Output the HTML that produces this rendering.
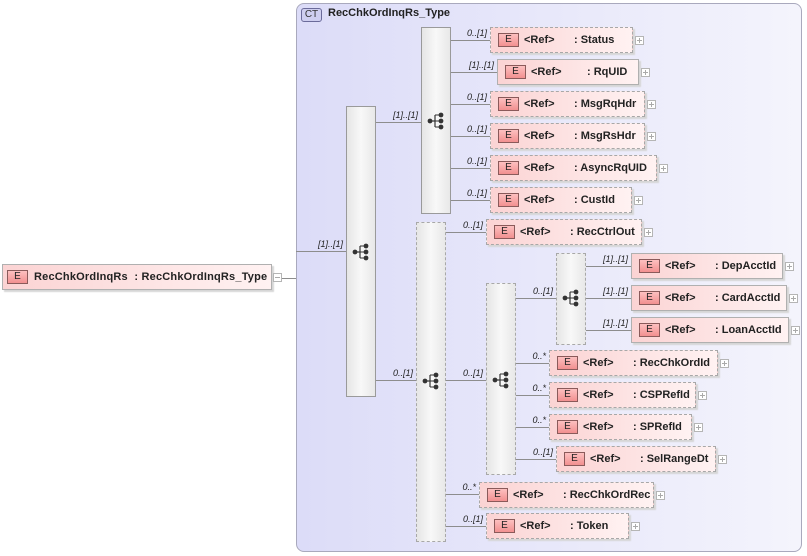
<!DOCTYPE html>
<html><head><meta charset="utf-8"><style>
body{margin:0;width:807px;height:556px;background:#fff;position:relative;overflow:hidden;font-family:"Liberation Sans",Arial,sans-serif}
.a{position:absolute}
#ct{left:296px;top:3px;width:506px;height:549px;border:1px solid #a9a9bd;border-radius:8px;background:linear-gradient(90deg,#dcdcf8,#f4f4fc);box-sizing:border-box}
.ctb{left:301px;top:8px;width:19px;height:12px;border:1px solid #6b6b9a;border-radius:3px;background:#cfcff0;font-size:10px;line-height:12px;text-align:center;color:#333}
.t{font-size:11px;font-weight:bold;color:#222;white-space:nowrap}
.cmp{background:linear-gradient(90deg,#e6e6e6,#f8f8f8 50%,#e8e8e8);border:1px solid #9a9a9a;box-sizing:border-box}
.cmp.d{border:1px dashed #a8a8a8}
.el{height:26px;box-sizing:border-box;border:1px solid #b0b0b0;background:linear-gradient(90deg,#fbd3d3,#fff2f2);box-shadow:2px 2px 1px #d6d6d6}
.el.d{border:1px dashed #a8a8a8}
.E{position:absolute;left:7px;top:5px;width:21px;height:14px;box-sizing:border-box;border:1px solid #8a5a5a;background:linear-gradient(#fdc0c0,#f29090);font-size:10px;line-height:12px;text-align:center;color:#222}
.pl{width:7px;height:7px;border:1px solid #b5b5b5;background:#fff;box-sizing:content-box}
.pl:before{content:"";position:absolute;left:1px;top:3px;width:5px;height:1px;background:#aaa}
.pl.p:after{content:"";position:absolute;left:3px;top:1px;width:1px;height:5px;background:#aaa}
.ln{height:1px;background:#8d8d8d}
.m{font-size:9px;font-style:italic;color:#222;white-space:nowrap}
</style></head><body>
<div id="ct" class="a"></div>
<div class="a ctb">CT</div>
<div class="a t" style="left:328px;top:7px">RecChkOrdInqRs_Type</div>
<div id="root" class="a el" style="left:2px;top:264px;width:270px;"><div class="E" style="left:4px">E</div><div class="a t" style="left:31px;top:6px;letter-spacing:0.2px">RecChkOrdInqRs&nbsp;&nbsp;: RecChkOrdInqRs_Type</div></div>
<div class="a pl" style="left:273px;top:273px"></div>
<div class="a ln" style="left:282px;top:278px;width:14px"></div>
<div id="x"></div>
<script>
var H='';
function cmp(x,y,w,h,d,choice){H+='<div class="a cmp'+(d?' d':'')+'" style="left:'+x+'px;top:'+y+'px;width:'+w+'px;height:'+h+'px"></div>';
var cx=x+w/2,cy=choice;
H+='<svg class="a" style="left:'+(cx-9)+'px;top:'+(cy-9)+'px" width="18" height="18"><circle cx="3" cy="9" r="2.4" fill="#333"/><line x1="3" y1="9" x2="8" y2="9" stroke="#333" stroke-width="1.2"/><line x1="8" y1="3" x2="8" y2="15" stroke="#333" stroke-width="1.2"/><line x1="8" y1="3" x2="14" y2="3" stroke="#333"/><line x1="8" y1="9" x2="14" y2="9" stroke="#333"/><line x1="8" y1="15" x2="14" y2="15" stroke="#333"/><circle cx="14" cy="3" r="2.4" fill="#333"/><circle cx="14" cy="9" r="2.4" fill="#333"/><circle cx="14" cy="15" r="2.4" fill="#333"/></svg>';}
function line(x1,x2,y,lab){H+='<div class="a ln" style="left:'+x1+'px;top:'+y+'px;width:'+(x2-x1)+'px"></div>';
if(lab)H+='<div class="a m" style="left:'+(x2-40)+'px;width:37px;text-align:right;top:'+(y-12)+'px">'+lab+'</div>';}
function el(x,y,w,name,d,off){off=off||83;H+='<div class="a el'+(d?' d':'')+'" style="left:'+x+'px;top:'+y+'px;width:'+w+'px"><div class="E">E</div><div class="a t" style="left:33px;top:6px">&lt;Ref&gt;</div><div class="a t" style="left:'+off+'px;top:6px">: '+name+'</div></div><div class="a pl p" style="left:'+(x+w+2)+'px;top:'+(y+9)+'px"></div>';}
line(296,346,251,'[1]..[1]');
cmp(346,106,30,291,0,252);
line(376,421,122,'[1]..[1]');
line(376,416,380,'0..[1]');
cmp(421,27,30,187,0,121);
var r=[[490,27,143,'Status',1],[497,59,142,'RqUID',0,89],[490,91,155,'MsgRqHdr',1],[490,123,155,'MsgRsHdr',1],[490,155,167,'AsyncRqUID',1],[490,187,142,'CustId',1]];
var lb=['0..[1]','[1]..[1]','0..[1]','0..[1]','0..[1]','0..[1]'];
r.forEach(function(e,i){line(451,e[0],e[1]+13,lb[i]);el(e[0],e[1],e[2],e[3],e[4],e[5]);});
cmp(416,222,30,320,1,381);
line(446,486,232,'0..[1]');el(486,219,156,'RecCtrlOut',1);
line(446,486,380,'0..[1]');
cmp(486,283,30,192,1,380);
line(516,556,298,'0..[1]');
cmp(556,253,30,92,1,298);
[[631,253,152,'DepAcctId'],[631,285,156,'CardAcctId'],[631,317,158,'LoanAcctId']].forEach(function(e){line(586,e[0],e[1]+13,'[1]..[1]');el(e[0],e[1],e[2],e[3],0);});
[[549,350,169,'RecChkOrdId','0..*'],[549,382,147,'CSPRefId','0..*'],[549,414,143,'SPRefId','0..*'],[556,446,160,'SelRangeDt','0..[1]']].forEach(function(e){line(516,e[0],e[1]+13,e[4]);el(e[0],e[1],e[2],e[3],1);});
line(446,479,494,'0..*');el(479,482,175,'RecChkOrdRec',1);
line(446,486,526,'0..[1]');el(486,513,143,'Token',1);
document.getElementById('x').innerHTML=H;
</script>
</body></html>
